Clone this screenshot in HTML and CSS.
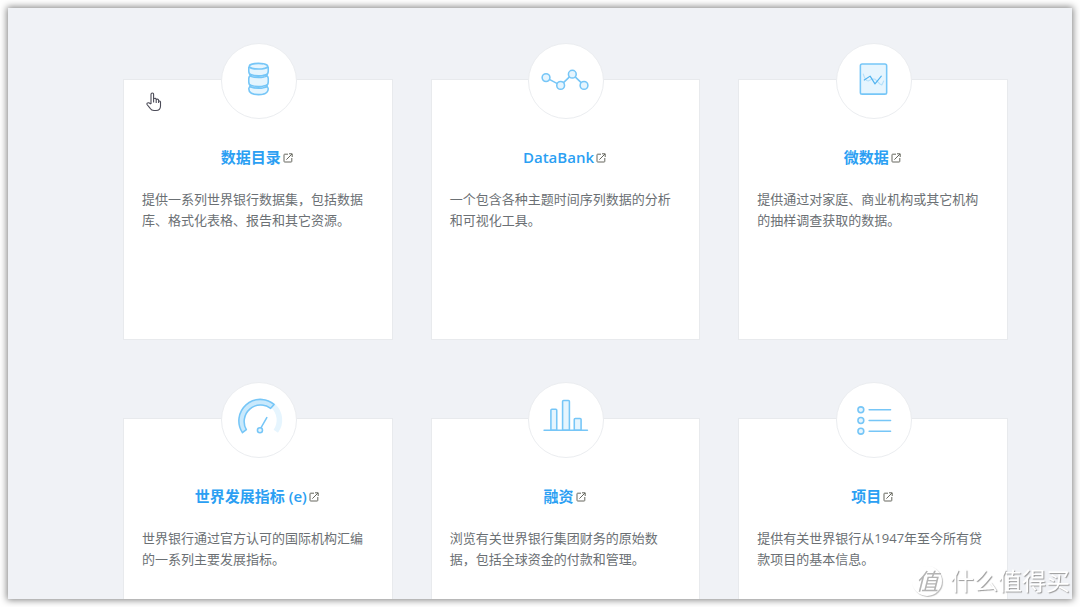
FILE: index.html
```html
<!DOCTYPE html>
<html lang="zh-CN">
<head>
<meta charset="utf-8">
<meta name="viewport" content="width=device-width, initial-scale=1">
<title>数据目录</title>
<link rel="stylesheet" href="styles.css">
</head>
<body>
<svg class="defs" aria-hidden="true">
  <symbol id="external" viewBox="0 0 10 10">
    <path d="M5 1.2H1.6Q1 1.2 1 1.8V8.4Q1 9 1.6 9H8.2Q8.8 9 8.8 8.4V5M6 .8H9.2V4M9 1L3.4 6.6" fill="none" stroke="currentColor" stroke-width="1"/>
  </symbol>
</svg>
<main class="panel">
  <div class="cards">
    <article class="card">
      <div class="badge">
        <svg class="icon" viewBox="0 0 76 76" aria-hidden="true">
          <path d="M27.500 24V28Q27.500 31 30 32Q27.500 33 27.500 35.500V39Q27.500 42 30 43Q27.500 44 27.500 46Q27.500 52 37.500 52T47.500 46Q47.500 44 45 43Q47.500 42 47.500 39V35.500Q47.500 33 45 32Q47.500 31 47.500 28V24Z"/>
          <ellipse cx="37.500" cy="22.800" rx="9.500" ry="2.900"/>
          <path class="line" d="M28.500 31Q37.500 34.500 46.500 31M28.500 33Q37.500 36 46.500 33M28.500 42Q37.500 45.500 46.500 42M28.500 44Q37.500 47 46.500 44"/>
        </svg>
      </div>
      <h2 class="title"><a class="link" href="#">数据目录<svg class="external"><use href="#external"/></svg></a></h2>
      <p class="text">提供一系列世界银行数据集，包括数据库、格式化表格、报告和其它资源。</p>
    </article>

    <article class="card">
      <div class="badge">
        <svg class="icon" viewBox="0 0 76 76" aria-hidden="true">
          <path class="line" d="M17.500 34.500L32.500 42.500L44.500 31L56.500 42.500"/>
          <circle cx="17.500" cy="34.500" r="4"/><circle cx="32.500" cy="42.500" r="4"/><circle cx="44.500" cy="31" r="4"/><circle cx="56.500" cy="42.500" r="4"/>
        </svg>
      </div>
      <h2 class="title"><a class="link" href="#">DataBank<svg class="external"><use href="#external"/></svg></a></h2>
      <p class="text">一个包含各种主题时间序列数据的分析和可视化工具。</p>
    </article>

    <article class="card">
      <div class="badge">
        <svg class="icon" viewBox="0 0 76 76" aria-hidden="true">
          <rect x="24" y="20.500" width="27" height="31" rx="1.800"/>
          <path class="line faint" d="M27 31Q29 38 32 38L36 36H39L44 41L46 42L48 38"/>
          <path class="line thin" d="M28 37L34 33L39 41L45.500 33"/>
        </svg>
      </div>
      <h2 class="title"><a class="link" href="#">微数据<svg class="external"><use href="#external"/></svg></a></h2>
      <p class="text">提供通过对家庭、商业机构或其它机构的抽样调查获取的数据。</p>
    </article>

    <article class="card">
      <div class="badge">
        <svg class="icon" viewBox="0 0 76 76" aria-hidden="true">
          <path class="soft" d="M54.500 21.500A22 22 0 0 1 57.500 51L53 48A17 17 0 0 0 50.500 25.500Z"/>
          <path class="arc" d="M21 51A22 22 0 0 1 53.500 22L50 26A17 17 0 0 0 25 48Z"/>
          <path class="line" d="M40 46L46 35.500"/>
          <circle cx="39" cy="48.500" r="2.600"/>
        </svg>
      </div>
      <h2 class="title"><a class="link" href="#">世界发展指标 (e)<svg class="external"><use href="#external"/></svg></a></h2>
      <p class="text">世界银行通过官方认可的国际机构汇编的一系列主要发展指标。</p>
    </article>

    <article class="card">
      <div class="badge">
        <svg class="icon" viewBox="0 0 76 76" aria-hidden="true">
          <path d="M22.500 48.500V28Q22.500 27 23.500 27H27.500Q28.500 27 28.500 28V48.500ZM34.500 48.500V19Q34.500 18 35.500 18H40.500Q41.500 18 41.500 19V48.500ZM46.500 48.500V37.500Q46.500 36.500 47.500 36.500H52.500Q53.500 36.500 53.500 37.500V48.500Z"/>
          <path class="line" d="M15.500 48.500H60"/>
        </svg>
      </div>
      <h2 class="title"><a class="link" href="#">融资<svg class="external"><use href="#external"/></svg></a></h2>
      <p class="text">浏览有关世界银行集团财务的原始数据，包括全球资金的付款和管理。</p>
    </article>

    <article class="card">
      <div class="badge">
        <svg class="icon" viewBox="0 0 76 76" aria-hidden="true">
          <circle cx="24.500" cy="27.500" r="3"/><circle cx="24.500" cy="38.500" r="3"/><circle cx="24.500" cy="49.500" r="3"/>
          <path class="line" d="M33 27.500H55M33 38.500H55M33 49.500H55"/>
        </svg>
      </div>
      <h2 class="title"><a class="link" href="#">项目<svg class="external"><use href="#external"/></svg></a></h2>
      <p class="text">提供有关世界银行从1947年至今所有贷款项目的基本信息。</p>
    </article>
  </div>
</main>
<svg class="pointer" viewBox="0 0 16 20" aria-hidden="true">
  <path d="M5 12V2.500Q5 1 6.300 1T7.600 2.500V8V6.700Q9.800 5.600 10.200 7.500V9V7.500Q12.400 6.500 12.600 8.500V9.500Q14 8.200 14.500 10V14Q14.500 18.500 10 18.500H8Q5.500 18.500 4 16.200L1 12.500Q.5 10.500 2.800 10.700L5 12M7.600 8V10.500M10.200 9V11M12.600 9.500V11"/>
</svg>
<div class="watermark">
  <span class="seal">值</span>
  <span>什么值得买</span>
</div>
</body>
</html>
```

FILE: styles.css
```css
* {
  box-sizing: border-box;
}

body {
  margin: 0;
  height: 100vh;
  padding: 8px;
  position: relative;
  overflow: hidden;
  background: #fff;
  color: #6b7074;
  font-family: "Open Sans", "Noto Sans CJK SC", sans-serif;
  font-size: 13px;
  line-height: 21px;
}

.defs {
  position: absolute;
  width: 0;
  height: 0;
}

.panel {
  height: 100%;
  padding: 71px 64px 40px 115px;
  overflow: auto;
  scrollbar-width: none;
  background: #f0f2f6;
  box-shadow: 0 0 7px 1px rgba(0, 0, 0, 0.5);
}

.cards {
  display: grid;
  grid-template-columns: repeat(3, minmax(0, 1fr));
  gap: 78px 38px;
}

.card {
  min-height: 261px;
  padding: 0 16px 20px 18px;
  border: 1px solid #e8eaed;
  background: #fff;
}

.badge {
  width: 76px;
  height: 76px;
  margin: -37px auto 28px;
  border: 1px solid #ebedf0;
  border-radius: 50%;
  background: #fff;
}

.icon {
  display: block;
  width: 100%;
  height: 100%;
  fill: #e6f5fe;
  stroke: #76c6f7;
  stroke-width: 1.6;
  stroke-linejoin: round;
  stroke-linecap: round;
}

.icon .line {
  fill: none;
}

.icon .thin {
  stroke-width: 1.2;
  stroke: #52b3ef;
}

.icon .faint {
  stroke-width: 1.2;
  stroke: #b5e0fa;
}

.icon .soft {
  stroke: none;
}

.icon .arc {
  fill: #c9e9fc;
}

.title {
  margin: 0 0 21px;
  padding-right: 4px;
  font-size: 15px;
  font-weight: 600;
  text-align: center;
}

.link {
  color: #2b9ff3;
  text-decoration: none;
}

.external {
  width: 10px;
  height: 10px;
  margin-left: 2px;
  color: #66675e;
}

.text {
  margin: 0;
}

.pointer {
  position: absolute;
  left: 146px;
  top: 92px;
  width: 16px;
  height: 20px;
  fill: #fff;
  stroke: #4b4b57;
  stroke-width: 1.1;
  stroke-linejoin: round;
}

.watermark {
  position: absolute;
  right: 10px;
  bottom: 11px;
  display: flex;
  align-items: center;
  gap: 8px;
  color: #fff;
  font-size: 23px;
  line-height: 30px;
  text-shadow: 1px 1px 1px #999;
}

.watermark span:last-child {
  font-size: 24px;
}

.seal {
  width: 30px;
  height: 30px;
  border-radius: 50%;
  background: #fff;
  box-shadow: 1px 1px 1px #bbb;
  color: #b4b4b4;
  font-style: italic;
  font-weight: 400;
  text-align: center;
  text-shadow: none;
}
```
